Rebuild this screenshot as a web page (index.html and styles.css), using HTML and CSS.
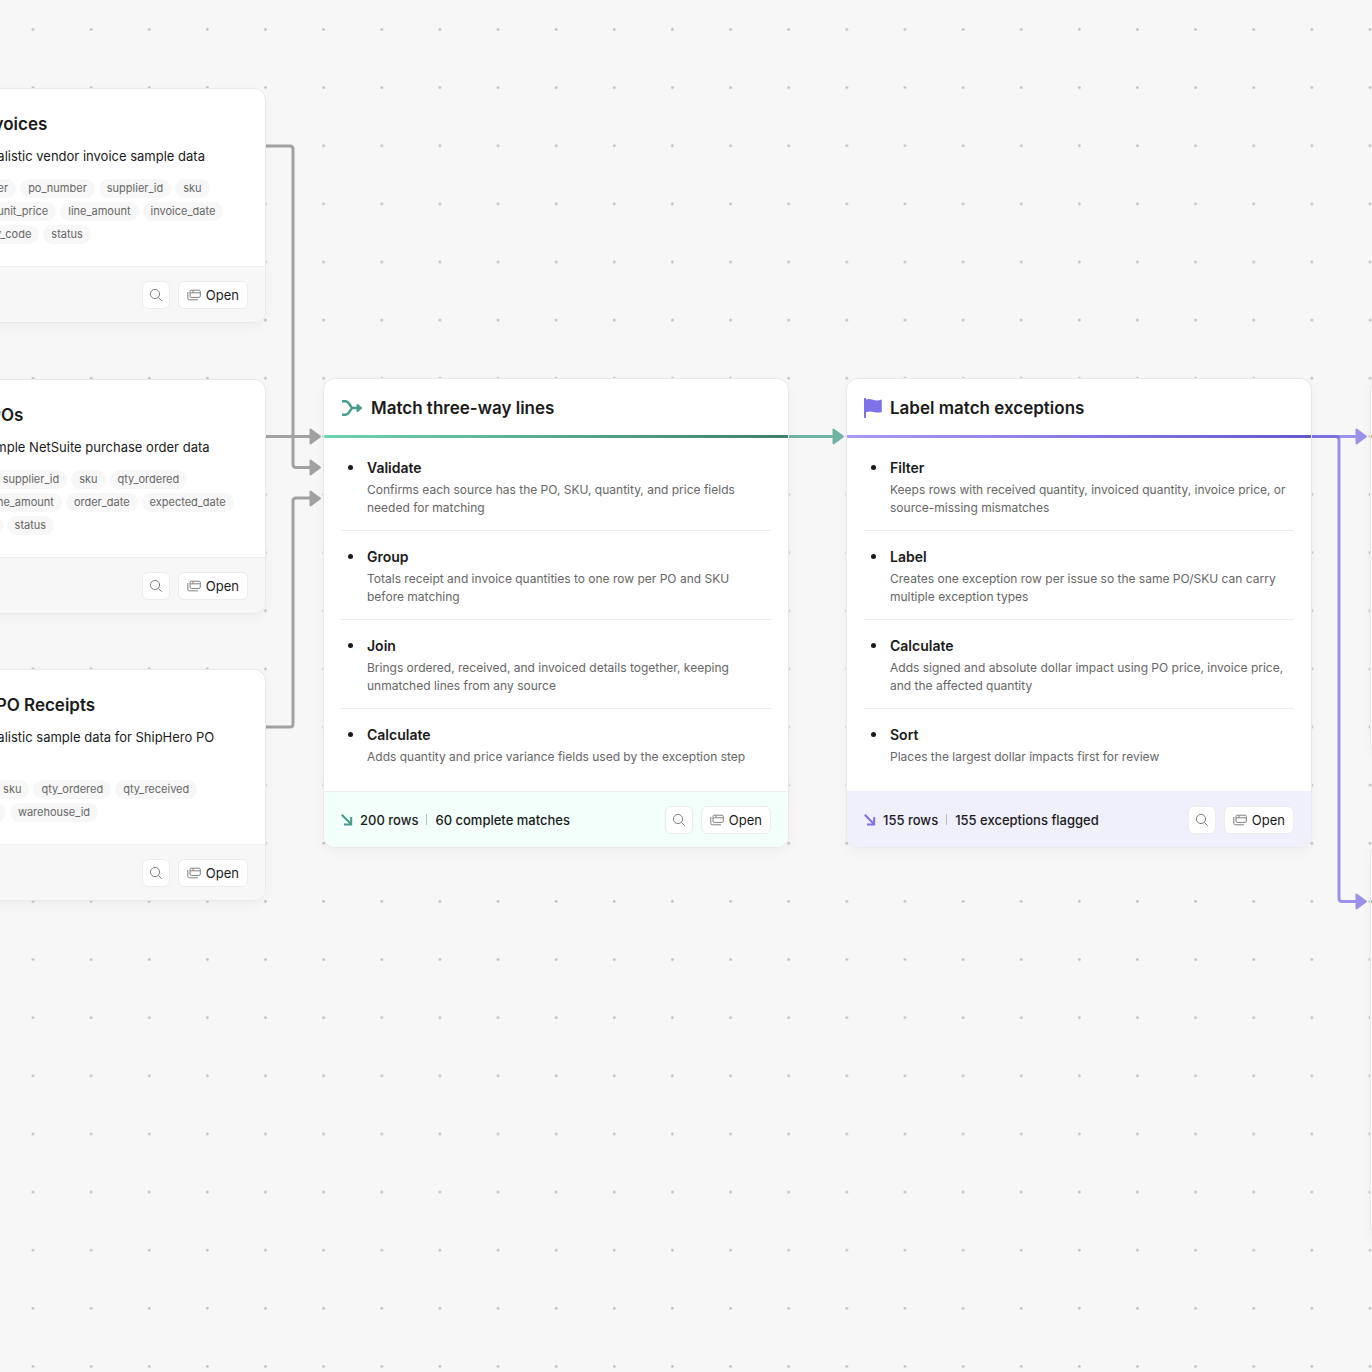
FILE: index.html
```html
<!DOCTYPE html>
<html lang="en">
<head>
    <meta charset="UTF-8">
    <meta name="viewport" content="width=device-width, initial-scale=1.0">
    <title>Three-way match workflow</title>
    <link rel="stylesheet" href="styles.css">
</head>
<body>
    <!-- shared icons -->
    <svg class="sprite" aria-hidden="true">
        <symbol id="icon-search" viewBox="0 0 14 14">
            <circle cx="6" cy="6" r="4.6" fill="none" stroke="currentColor"/>
            <path d="M9.4 9.4L12.8 12.8" fill="none" stroke="currentColor"/>
        </symbol>
        <symbol id="icon-window" viewBox="0 0 14 12">
            <rect x="3" y="1.2" width="10.3" height="7.2" rx="1.2" fill="none" stroke="currentColor"/>
            <path d="M3 3.8H13.3M6 1.5V3.5M.8 3V9.3Q.8 10.8 2.3 10.8H11" fill="none" stroke="currentColor"/>
        </symbol>
        <symbol id="icon-arrow" viewBox="0 0 12 12">
            <path d="M.8 .8L10 10M10.2 3V10.4H3" fill="none" stroke="currentColor" stroke-width="2"/>
        </symbol>
    </svg>

    <main class="canvas">
        <svg class="edges" aria-hidden="true">
            <defs>
                <pattern id="dots" x="4" y="0.5" width="58.13" height="58.13" patternUnits="userSpaceOnUse">
                    <circle cx="29" cy="29" r="1.3" fill="#bdbdbd"/>
                </pattern>
            </defs>
            <rect width="100%" height="100%" fill="url(#dots)"/>
            <g class="edge edge-gray">
                <path d="M265 146H290Q293 146 293 149V464Q293 467.500 296 467.500H312"/>
                <path d="M265 436.500H312"/>
                <path d="M265 727H290Q293 727 293 724V501Q293 498 296 498H312"/>
                <path class="head" d="M310.500 429.500L320 436.500L310.500 443.500Z"/>
                <path class="head" d="M310.500 460.500L320 467.500L310.500 474.500Z"/>
                <path class="head" d="M310.500 491.500L320 498.500L310.500 505.500Z"/>
            </g>
            <g class="edge edge-green">
                <path d="M788 436.500H835"/>
                <path class="head" d="M833.500 429.500L843 436.500L833.500 443.500Z"/>
            </g>
            <g class="edge edge-purple">
                <path d="M1311 436.500H1358"/>
                <path d="M1339 438V898Q1339 901.500 1342 901.500H1358"/>
                <path class="overlap" d="M1311 436.500H1337L1339 438"/>
                <path class="head" d="M1356.500 429.500L1366 436.500L1356.500 443.500Z"/>
                <path class="head" d="M1356.500 894.500L1366 901.500L1356.500 908.500Z"/>
            </g>
        </svg>

        <article class="node source node-invoices">
            <div class="source-body">
                <h2>Purchasing Vendor Invoices</h2>
                <p>Demo tables of generated, realistic vendor invoice sample data</p>
                <ul class="fields">
                    <li>invoice_type_id</li><li>invoice_number</li><li>po_number</li><li>supplier_id</li><li>sku</li>
                    <li>part_number</li><li>qty_invoiced</li><li>unit_price</li><li>line_amount</li><li>invoice_date</li>
                    <li>due_date</li><li>tax_rate</li><li>currency_code</li><li>status</li>
                </ul>
            </div>
            <footer>
                <button class="btn btn-icon" aria-label="Search"><svg><use href="#icon-search"/></svg></button>
                <button class="btn"><svg class="window"><use href="#icon-window"/></svg>Open</button>
            </footer>
        </article>

        <article class="node source node-pos">
            <div class="source-body">
                <h2>Purchasing NetSuite POs</h2>
                <p>Demo tables of generated sample NetSuite purchase order data</p>
                <ul class="fields">
                    <li>order_number</li><li>line_number</li><li>supplier_id</li><li>sku</li><li>qty_ordered</li>
                    <li>product_name</li><li>unit_price</li><li>line_amount</li><li>order_date</li><li>expected_date</li>
                    <li>warehouse_id</li><li>currency_code</li><li>status</li>
                </ul>
            </div>
            <footer>
                <button class="btn btn-icon" aria-label="Search"><svg><use href="#icon-search"/></svg></button>
                <button class="btn"><svg class="window"><use href="#icon-window"/></svg>Open</button>
            </footer>
        </article>

        <article class="node source node-receipts">
            <div class="source-body">
                <h2>ShipHero Warehouse PO Receipts</h2>
                <p>Demo tables of generated, realistic sample data for ShipHero PO receipts</p>
                <ul class="fields">
                    <li>receipt_item_id</li><li>po_number</li><li>sku</li><li>qty_ordered</li><li>qty_received</li>
                    <li>received_date</li><li>condition_code</li><li>warehouse_id</li>
                </ul>
            </div>
            <footer>
                <button class="btn btn-icon" aria-label="Search"><svg><use href="#icon-search"/></svg></button>
                <button class="btn"><svg class="window"><use href="#icon-window"/></svg>Open</button>
            </footer>
        </article>

        <article class="node step green node-match">
            <header>
                <svg class="icon" viewBox="0 0 22 18"><path d="M1 2.200H4.500Q6.500 2.200 8 4.500L11 9L8 13.500Q6.500 15.800 4.500 15.800H1M11 9H16" fill="none" stroke="currentColor" stroke-width="2.400"/><path d="M16.500 6L20 9L16.500 12Z" fill="currentColor" stroke="currentColor" stroke-width="2" stroke-linejoin="round"/></svg>
                <h2>Match three-way lines</h2>
            </header>
            <ul class="tasks">
                <li><h3>Validate</h3><p>Confirms each source has the PO, SKU, quantity, and price fields needed for matching</p></li>
                <li><h3>Group</h3><p>Totals receipt and invoice quantities to one row per PO and SKU before matching</p></li>
                <li><h3>Join</h3><p>Brings ordered, received, and invoiced details together, keeping unmatched lines from any source</p></li>
                <li><h3>Calculate</h3><p>Adds quantity and price variance fields used by the exception step</p></li>
            </ul>
            <footer>
                <div class="stats">
                    <svg><use href="#icon-arrow"/></svg>
                    <span>200 rows</span><i></i><span>60 complete matches</span>
                </div>
                <button class="btn btn-icon" aria-label="Search"><svg><use href="#icon-search"/></svg></button>
                <button class="btn"><svg class="window"><use href="#icon-window"/></svg>Open</button>
            </footer>
        </article>

        <article class="node step purple node-label">
            <header>
                <svg class="icon flag" viewBox="0 0 18 20"><path d="M0 0H2V1.500Q5 .5 9 1.800T17.800 1.500V14Q14 15.200 10 14T2 14V20H0Z" fill="currentColor"/></svg>
                <h2>Label match exceptions</h2>
            </header>
            <ul class="tasks">
                <li><h3>Filter</h3><p>Keeps rows with received quantity, invoiced quantity, invoice price, or source-missing mismatches</p></li>
                <li><h3>Label</h3><p>Creates one exception row per issue so the same PO/SKU can carry multiple exception types</p></li>
                <li><h3>Calculate</h3><p>Adds signed and absolute dollar impact using PO price, invoice price, and the affected quantity</p></li>
                <li><h3>Sort</h3><p>Places the largest dollar impacts first for review</p></li>
            </ul>
            <footer>
                <div class="stats">
                    <svg><use href="#icon-arrow"/></svg>
                    <span>155 rows</span><i></i><span>155 exceptions flagged</span>
                </div>
                <button class="btn btn-icon" aria-label="Search"><svg><use href="#icon-search"/></svg></button>
                <button class="btn"><svg class="window"><use href="#icon-window"/></svg>Open</button>
            </footer>
        </article>

        <!-- next steps, past the right edge of the view -->
        <article class="node step orange next node-next-top"><header></header></article>
        <article class="node step green next node-next-bottom"><header></header></article>
    </main>
</body>
</html>
```
FILE: styles.css
```css
* {
    box-sizing: border-box;
}
body {
    margin: 0;
    font-family: Inter, "Liberation Sans", sans-serif;
    background-color: #f7f7f7;
    color: #1a1a1a;
}
h2, h3, p, ul {
    margin: 0;
    padding: 0;
}
ul {
    list-style: none;
}
.sprite {
    position: absolute;
    width: 0;
    height: 0;
}
.canvas {
    position: relative;
    min-height: 100vh;
    overflow: hidden;
}

/* Connectors and dot grid */
.edges {
    position: absolute;
    inset: 0;
    width: 100%;
    height: 100%;
}
.edge path {
    fill: none;
    stroke-width: 3px;
}
.edge .head {
    stroke-width: 2px;
    stroke-linejoin: round;
}
.edge-gray path {
    stroke: #a1a1a1;
}
.edge-gray .head {
    fill: #a1a1a1;
}
.edge-green path {
    stroke: #70b3a6;
}
.edge-green .head {
    fill: #70b3a6;
}
.edge-purple path {
    stroke: #9a92ea;
}
.edge-purple .head {
    fill: #9a92ea;
}
.edge-purple .overlap {
    stroke: #7c70e2;
}

/* Nodes */
.node {
    position: absolute;
    width: 466px;
    background-color: #fff;
    border: 1px solid #e9e9e9;
    border-radius: 12px;
    box-shadow: 0 4px 12px rgba(0, 0, 0, 0.04);
    overflow: hidden;
}
.node-invoices {
    left: -200px;
    top: 88px;
}
.node-pos {
    left: -200px;
    top: 379px;
}
.node-receipts {
    left: -200px;
    top: 669px;
}
.node-match {
    left: 323px;
    top: 378px;
}
.node-label {
    left: 846px;
    top: 378px;
}
.node h2 {
    font-size: 17px;
    line-height: 24px;
    font-weight: 600;
}
.node footer {
    display: flex;
    justify-content: flex-end;
    align-items: center;
    gap: 8px;
    height: 56px;
    padding: 0 17px;
    border-top: 1px solid #efefef;
    background-color: #f7f7f7;
}

/* Source nodes */
.source-body {
    padding: 23px 17px 22px;
}
.source-body p {
    margin-top: 10px;
    font-size: 13px;
    line-height: 20px;
}
.fields {
    display: flex;
    flex-wrap: wrap;
    gap: 4px;
    margin-top: 13px;
}
.fields li {
    padding: 0 8px;
    border-radius: 10px;
    background-color: #f7f7f7;
    color: #666;
    font-size: 11px;
    line-height: 19px;
}

/* Step nodes */
.step header {
    display: flex;
    align-items: center;
    gap: 8px;
    height: 59px;
    padding: 2px 17px 0;
    border-bottom: 3px solid;
}
.icon {
    width: 22px;
    height: 18px;
}
.flag {
    width: 18px;
    height: 20px;
}
.green .icon, .green .stats svg {
    color: #479c8d;
}
.purple .icon, .purple .stats svg {
    color: #7d72e8;
}
.green header {
    border-image: linear-gradient(90deg, #6fd3b0, #437f6c) 1;
}
.purple header {
    border-image: linear-gradient(90deg, #a99bf7, #6457d2) 1;
}
.orange header {
    border-color: #f0b78c;
}
.tasks {
    padding: 4px 17px 12px;
}
.tasks li {
    position: relative;
    padding: 15px 4px 13px 26px;
    border-bottom: 1px solid #ececec;
}
.tasks li:last-child {
    border-bottom: 0;
}
.tasks li::before {
    content: "";
    position: absolute;
    left: 7px;
    top: 23px;
    width: 5px;
    height: 5px;
    border-radius: 50%;
    background-color: #1a1a1a;
}
.tasks h3 {
    font-size: 14px;
    line-height: 22px;
    font-weight: 600;
}
.tasks p {
    margin-top: 2px;
    color: #666;
    font-size: 12px;
    line-height: 18px;
}
.green footer {
    background-color: #f2fffa;
}
.purple footer {
    border-color: #f0effc;
    background-color: #f0effc;
}
.stats {
    display: flex;
    align-items: center;
    flex: 1;
    font-size: 13px;
    font-weight: 500;
}
.stats svg {
    width: 12px;
    height: 12px;
    margin-right: 7px;
}
.stats i {
    width: 1px;
    height: 11px;
    margin: 0 8px;
    background-color: #bbb;
}

/* Buttons */
.btn {
    display: flex;
    align-items: center;
    justify-content: center;
    gap: 5px;
    height: 28px;
    padding: 0 8px;
    border: 1px solid #ececec;
    border-radius: 6px;
    background-color: #fff;
    color: #1a1a1a;
    font-family: inherit;
    font-size: 13px;
    cursor: pointer;
}
.btn svg {
    width: 14px;
    height: 14px;
    color: #808080;
}
.btn .window {
    height: 12px;
}
.btn-icon {
    width: 28px;
    padding: 0;
}

.next {
    left: 1370px;
}
.node-next-top {
    top: 378px;
    height: 376px;
}
.node-next-bottom {
    top: 843px;
    height: 394px;
}
```
